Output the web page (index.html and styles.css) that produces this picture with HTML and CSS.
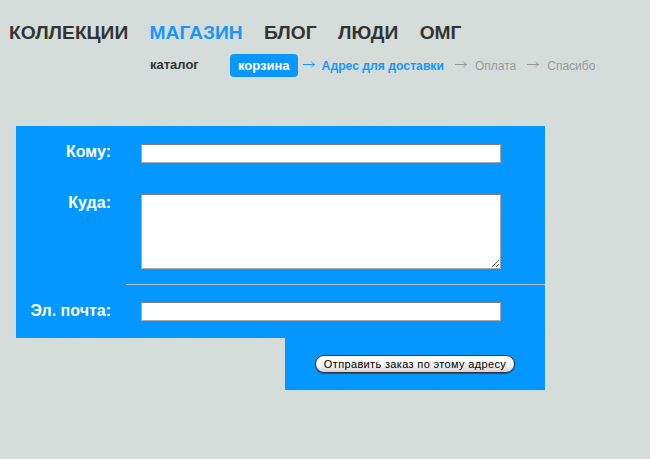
FILE: index.html
```html
<!DOCTYPE html>
<html lang="en">

<head>
  <meta charset="UTF-8">
  <title>Адрес для доставки</title>
  <link rel="stylesheet" href="styles.css">
</head>

<body>

  <!-- Main menu -->
  <nav class="main-nav">
    <a href="#">КОЛЛЕКЦИИ</a>
    <a href="#" class="active">МАГАЗИН</a>
    <a href="#">БЛОГ</a>
    <a href="#">ЛЮДИ</a>
    <a href="#">ОМГ</a>
  </nav>

  <!-- Shop menu and checkout steps -->
  <div class="sub-nav">
    <a href="#" class="catalog">каталог</a>
    <div class="steps">
      <a href="#" class="cart">корзина</a>
      <svg class="arrow arrow-blue" width="12" height="7" viewBox="0 0 12 7"><path d="M0 3.5H11.5M8.5 1L11.5 3.5L8.5 6" /></svg>
      <a href="#" class="step-current">Адрес для доставки</a>
      <svg class="arrow" width="12" height="7" viewBox="0 0 12 7"><path d="M0 3.5H11.5M8.5 1L11.5 3.5L8.5 6" /></svg>
      <span class="step">Оплата</span>
      <svg class="arrow" width="12" height="7" viewBox="0 0 12 7"><path d="M0 3.5H11.5M8.5 1L11.5 3.5L8.5 6" /></svg>
      <span class="step">Спасибо</span>
    </div>
  </div>

  <form class="order-form">
    <div class="panel">
      <div class="form-row row-to">
        <label for="to">Кому:</label>
        <input type="text" id="to">
      </div>
      <div class="form-row row-address">
        <label for="address">Куда:</label>
        <textarea id="address"></textarea>
      </div>
      <hr class="divider">
      <div class="form-row row-email">
        <label for="email">Эл. почта:</label>
        <input type="text" id="email">
      </div>
    </div>
    <div class="submit-box">
      <button type="submit">Отправить заказ по этому адресу</button>
    </div>
  </form>

</body>

</html>
```

FILE: styles.css
```css
/* Page */

body {
  margin: 0;
  height: 459px;
  overflow: hidden;
  font-family: "Liberation Sans", Arial, sans-serif;
  background-color: #d6dedc;
  /* paper grain */
  background-image: url("data:image/svg+xml,%3Csvg xmlns='http://www.w3.org/2000/svg' width='200' height='200'%3E%3Cfilter id='n'%3E%3CfeTurbulence type='fractalNoise' baseFrequency='0.9' numOctaves='2'/%3E%3CfeColorMatrix values='0 0 0 0 0.5 0 0 0 0 0.55 0 0 0 0 0.53 0 0 0 0.1 0'/%3E%3C/filter%3E%3Crect width='200' height='200' filter='url(%23n)'/%3E%3C/svg%3E");
}

a {
  text-decoration: none;
}

/* Main menu */
.main-nav {
  display: flex;
  gap: 21.4px;
  padding: 21px 0 0 9px;
  font-size: 19.2px;
  line-height: 23px;
  font-weight: bold;
}

.main-nav a {
  color: #333;
}

.main-nav a.active {
  color: #1896fd;
}

/* Sub menu */
.sub-nav {
  display: flex;
  align-items: center;
  padding: 10px 0 0 150px;
  font-size: 13px;
  height: 23px;
}

.catalog {
  color: #333;
  font-weight: bold;
  width: 80px;
  margin-top: -2px;
}

.steps {
  display: flex;
  align-items: center;
}

.cart {
  background-color: #0996fd;
  color: #fff;
  font-weight: bold;
  padding: 4px 8px;
  line-height: 15px;
  border-radius: 4px;
}

.arrow {
  color: #999;
  fill: none;
  stroke: currentColor;
  stroke-width: 1;
  margin: -2px 8px 0 11px;
}

.arrow-blue {
  color: #1896fd;
  margin-left: 5px;
  margin-right: 7px;
}

.step-current {
  color: #1896fd;
  font-size: 12.2px;
  font-weight: bold;
}

.step {
  color: #999;
  font-size: 12px;
}

/* Order form */
.order-form {
  margin: 49px 0 0 16px;
  width: 529px;
}

.panel {
  background-color: #0497ff;
  padding-top: 18px;
  height: 194px;
}

.form-row {
  display: flex;
  align-items: flex-start;
}

.form-row label {
  width: 95px;
  margin-right: 30px;
  text-align: right;
  color: #fff;
  font-size: 16px;
  font-weight: bold;
  line-height: 18px;
}

.row-to label {
  margin-top: -1px;
}

.form-row input,
.form-row textarea {
  box-sizing: border-box;
  width: 360px;
  margin: 0;
  padding: 1px 3px;
  background-color: #fff;
  border: 1px solid #a8a8a8;
  border-top-color: #808080;
  border-radius: 0;
  font-family: inherit;
}

.form-row input {
  height: 19px;
}

.row-address {
  margin-top: 31px;
}

.form-row textarea {
  height: 75px;
  display: block;
}

.divider {
  margin: 15px 0 17px 110px;
  height: 1px;
  border: 0;
  background-color: #b5bfc5;
}

.submit-box {
  margin-left: 269px;
  height: 52px;
  background-color: #0497ff;
  display: flex;
  justify-content: flex-end;
  align-items: flex-start;
  padding: 17px 30px 0 0;
  box-sizing: border-box;
}

.submit-box button {
  height: 18px;
  width: 200px;
  padding: 0;
  border: 1px solid #334;
  border-radius: 9px;
  background: linear-gradient(#fff, #f4f4f4 60%, #d4d4d4);
  box-shadow: 0 1px 1px rgba(0, 0, 0, 0.4);
  color: #000;
  font-family: "Liberation Sans", Arial, sans-serif;
  font-size: 11px;
  letter-spacing: 0.35px;
  white-space: nowrap;
}
```
